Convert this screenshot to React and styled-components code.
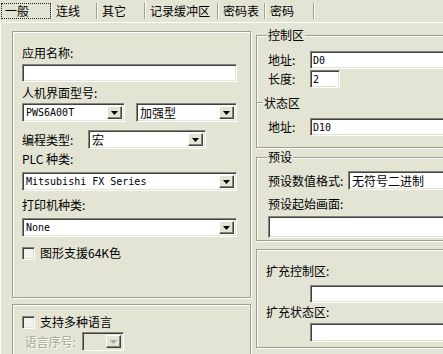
import React from 'react';
import styled, { createGlobalStyle } from 'styled-components';

const BG = '#E4E4D4';
const DARK = '#A0A08E';
const SHADE = '#848478';

const GlobalStyle = createGlobalStyle`
  html, body { margin: 0; padding: 0; background: ${BG}; overflow: hidden; }
  body { font-family: "Noto Sans CJK SC", "Noto Sans", sans-serif; font-size: 12px; color: #000; }
  #root { width: 443px; height: 354px; }
`;

const Window = styled.div`
  width: 443px;
  height: 354px;
  overflow: hidden;
  background: ${BG};
  display: flex;
  flex-direction: column;
`;

const TabBar = styled.div`
  height: 22px;
  flex-shrink: 0;
  display: flex;
  align-items: center;
`;

const Tab = styled.div`
  width: ${(p) => p.$w}px;
  height: 16px;
  box-sizing: border-box;
  flex-shrink: 0;
  display: flex;
  align-items: center;
  padding-left: ${(p) => (p.$active ? 2 : 5)}px;
  border-right: 1px solid ${DARK};
  box-shadow: 1px 0 0 #fff;
  white-space: nowrap;
  line-height: 14px;
`;

const TabCaption = styled.span`
  display: flex;
  align-items: center;
  height: 14px;
  width: ${(p) => (p.$active ? '45px' : 'auto')};
  padding-left: ${(p) => (p.$active ? 3 : 0)}px;
  outline: ${(p) => (p.$active ? '1px dotted #222' : 'none')};
`;

const Panel = styled.div`
  flex: 1;
  border-top: 1px solid #fff;
  border-left: 1px solid #fff;
  padding-left: 11px;
  display: flex;
  gap: 5px;
  align-items: flex-start;
`;

const Column = styled.div`
  width: ${(p) => p.$w}px;
  flex-shrink: 0;
  display: flex;
  flex-direction: column;
  padding-top: ${(p) => p.$pt}px;
`;

const GroupBox = styled.div`
  box-sizing: border-box;
  height: ${(p) => (p.$h ? `${p.$h}px` : 'auto')};
  margin-top: ${(p) => p.$mt || 0}px;
  border: 1px solid ${DARK};
  box-shadow: inset 1px 1px 0 #fff, 1px 1px 0 #fff;
  padding: ${(p) => p.$pad};
  display: flex;
  flex-direction: column;
  flex-shrink: 0;
`;

const FieldSet = styled.fieldset`
  margin: ${(p) => p.$mt || 0}px 0 0 0;
  min-width: 0;
  border: 1px solid ${DARK};
  box-shadow: inset 1px 1px 0 #fff, 1px 1px 0 #fff;
  padding: 0 8px ${(p) => p.$pb}px 11px;
  display: flex;
  flex-direction: column;
`;

const Legend = styled.legend`
  padding: 0 1px;
  margin-left: -1px;
  line-height: 12px;
  height: 12px;
  background: ${BG};
  white-space: nowrap;
`;

const SubLegend = styled.div`
  display: flex;
  align-items: center;
  height: 12px;
  line-height: 12px;
  margin: ${(p) => p.$mt || 0}px 0 0 -11px;
  white-space: nowrap;
  &::before {
    content: '';
    width: 6px;
    height: 0;
    border-top: 1px solid ${DARK};
    border-bottom: 1px solid #fff;
    margin-right: 1px;
  }
`;

const Label = styled.div`
  height: 14px;
  line-height: 14px;
  margin-top: ${(p) => p.$mt || 0}px;
  width: ${(p) => (p.$w ? `${p.$w}px` : 'auto')};
  flex-shrink: 0;
  white-space: nowrap;
  color: ${(p) => (p.$disabled ? '#A8A898' : '#000')};
  text-shadow: ${(p) => (p.$disabled ? '1px 1px 0 #fff' : 'none')};
`;

const Row = styled.div`
  display: flex;
  align-items: center;
  gap: ${(p) => p.$gap || 0}px;
  margin-top: ${(p) => p.$mt || 0}px;
  height: ${(p) => p.$h}px;
  flex-shrink: 0;
`;

const sizeRule = (p) =>
  p.$w ? `width: ${p.$w}px; flex: none;` : p.$grow ? 'flex: 1 1 auto; width: auto;' : 'width: 100%; flex: none;';

const Field = styled.input`
  box-sizing: border-box;
  height: ${(p) => p.$h || 18}px;
  ${sizeRule}
  min-width: 0;
  margin: ${(p) => p.$mt || 0}px 0 0 0;
  padding: 0 2px;
  border: 1px solid;
  border-color: ${SHADE} #fff #fff ${SHADE};
  box-shadow: inset 1px 1px 0 #404040, inset -1px -1px 0 ${BG};
  background: #fff;
  font: 10px "DejaVu Sans Mono", "Liberation Mono", monospace;
  color: #000;
  outline: none;
`;

const SelectBox = styled.div`
  box-sizing: border-box;
  height: 19px;
  ${sizeRule}
  min-width: 0;
  margin-top: ${(p) => p.$mt || 0}px;
  display: flex;
  align-items: stretch;
  padding: 2px;
  border: 1px solid;
  border-color: ${SHADE} #fff #fff ${SHADE};
  box-shadow: inset 1px 1px 0 #404040, inset -1px -1px 0 ${BG};
  background: ${(p) => (p.$disabled ? BG : '#fff')};
`;

const SelectText = styled.div`
  flex: 1;
  display: flex;
  align-items: center;
  padding-left: 1px;
  white-space: nowrap;
  line-height: 13px;
  font-family: ${(p) =>
    p.$mono ? '"DejaVu Sans Mono", "Liberation Mono", monospace' : '"Noto Sans CJK SC", sans-serif'};
  font-size: ${(p) => (p.$mono ? 10 : 12)}px;
`;

const DropButton = styled.div`
  box-sizing: border-box;
  width: 15px;
  flex-shrink: 0;
  background: ${BG};
  border: 1px solid;
  border-color: #fff #404040 #404040 #fff;
  box-shadow: inset -1px -1px 0 ${SHADE};
  display: flex;
  align-items: center;
  justify-content: center;
`;

const CheckBox = styled.span`
  box-sizing: border-box;
  width: 13px;
  height: 13px;
  flex-shrink: 0;
  border: 1px solid;
  border-color: ${SHADE} #fff #fff ${SHADE};
  box-shadow: inset 1px 1px 0 #404040, inset -1px -1px 0 ${BG};
  background: #F4F4EC;
`;

const Arrow = ({ disabled }) => (
  <svg width="7" height="4" viewBox="0 0 7 4">
    <path d="M0 0h7L3.5 4z" fill={disabled ? '#A8A898' : '#000'} />
  </svg>
);

const Select = ({ value, mono, w, grow, mt, disabled }) => (
  <SelectBox $w={w} $grow={grow} $mt={mt} $disabled={disabled}>
    <SelectText $mono={mono}>{value}</SelectText>
    <DropButton>
      <Arrow disabled={disabled} />
    </DropButton>
  </SelectBox>
);

const tabs = [
  { t: '一般', w: 51, active: true },
  { t: '连线', w: 46 },
  { t: '其它', w: 48 },
  { t: '记录缓冲区', w: 73 },
  { t: '密码表', w: 47 },
  { t: '密码', w: 49 },
];

export default function App() {
  return (
    <>
      <GlobalStyle />
      <Window>
        <TabBar>
          {tabs.map((tb) => (
            <Tab key={tb.t} $w={tb.w} $active={tb.active}>
              <TabCaption $active={tb.active}>{tb.t}</TabCaption>
            </Tab>
          ))}
        </TabBar>
        <Panel>
          <Column $w={239} $pt={8}>
            <GroupBox $h={267} $pad="0 13px 0 9px">
              <Label $mt={14}>应用名称:</Label>
              <Field $mt={4} readOnly value="" />
              <Label $mt={4}>人机界面型号:</Label>
              <Row $mt={3} $h={19} $gap={11}>
                <Select w={103} mono value="PWS6A00T" />
                <Select w={101} value="加强型" />
              </Row>
              <Row $mt={8} $h={19}>
                <Label $w={66}>编程类型:</Label>
                <Select w={118} value="宏" />
              </Row>
              <Label $mt={3}>PLC 种类:</Label>
              <Select mt={6} mono value="Mitsubishi FX Series" />
              <Label $mt={7}>打印机种类:</Label>
              <Select mt={6} mono value="None" />
              <Row $mt={9} $h={14} $gap={5}>
                <CheckBox />
                <Label>图形支援64K色</Label>
              </Row>
            </GroupBox>
            <GroupBox $h={60} $mt={6} $pad="0 13px 0 9px">
              <Row $mt={10} $h={14} $gap={5}>
                <CheckBox />
                <Label>支持多种语言</Label>
              </Row>
              <Row $mt={3} $h={19}>
                <Label $w={60} $disabled>
                  &nbsp;语言序号:
                </Label>
                <Select w={42} value="" disabled />
              </Row>
            </GroupBox>
          </Column>
          <Column $w={230} $pt={6}>
            <FieldSet $pb={11}>
              <Legend>控制区</Legend>
              <Row $mt={10} $h={18}>
                <Label $w={42}>地址:</Label>
                <Field $grow readOnly value="D0" />
              </Row>
              <Row $mt={1} $h={18}>
                <Label $w={42}>长度:</Label>
                <Field $w={30} readOnly value="2" />
              </Row>
              <SubLegend $mt={9}>状态区</SubLegend>
              <Row $mt={9} $h={18}>
                <Label $w={42}>地址:</Label>
                <Field $grow readOnly value="D10" />
              </Row>
            </FieldSet>
            <FieldSet $mt={3} $pb={2}>
              <Legend>预设</Legend>
              <Row $mt={8} $h={19}>
                <Label $w={80}>预设数值格式:</Label>
                <Select grow value="无符号二进制" />
              </Row>
              <Label $mt={7}>预设起始画面:</Label>
              <Field $mt={5} $h={22} readOnly value="" />
            </FieldSet>
            <GroupBox $mt={8} $pad="0 8px 5px 9px">
              <Label $mt={14}>扩充控制区:</Label>
              <Row $mt={7} $h={18}>
                <Label $w={44} />
                <Field $grow readOnly value="" />
              </Row>
              <Label $mt={2}>扩充状态区:</Label>
              <Row $mt={4} $h={19}>
                <Label $w={44} />
                <Field $grow $h={19} readOnly value="" />
              </Row>
            </GroupBox>
          </Column>
        </Panel>
      </Window>
    </>
  );
}
